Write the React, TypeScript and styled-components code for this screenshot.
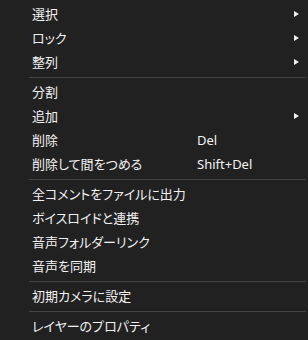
import React from "react";
import styled, { createGlobalStyle } from "styled-components";

const Global = createGlobalStyle`
  html, body { margin: 0; padding: 0; background: #212121; }
  body { width: 308px; height: 340px; overflow: hidden; }
`;

const Menu = styled.div`
  width: 308px;
  height: 340px;
  box-sizing: border-box;
  padding: 2px 0;
  background: #212121;
  display: flex;
  flex-direction: column;
  font-family: "Noto Sans CJK JP", "Noto Sans", sans-serif;
  font-size: 13px;
  font-feature-settings: "palt";
  color: #f2f2f2;
`;

const Row = styled.div`
  height: 24px;
  display: grid;
  grid-template-columns: 165px 1fr 14px;
  align-items: center;
  padding-left: 32px;
`;

const Label = styled.span`
  white-space: nowrap;
  line-height: 24px;
`;

const Shortcut = styled.span`
  font-family: "Noto Sans", sans-serif;
  white-space: nowrap;
  line-height: 24px;
`;

const Arrow = styled.span`
  width: 0;
  height: 0;
  border-top: 3.5px solid transparent;
  border-bottom: 3.5px solid transparent;
  border-left: 5px solid #f2f2f2;
  justify-self: start;
`;

const Separator = styled.div`
  height: 6px;
  display: flex;
  align-items: center;
  padding: 0 2px 0 29px;
  &::after {
    content: "";
    flex: 1;
    height: 1px;
    background: #434343;
  }
`;

type Item = { label?: string; shortcut?: string; sub?: boolean; sep?: boolean };

const items: Item[] = [
  { label: "選択", sub: true },
  { label: "ロック", sub: true },
  { label: "整列", sub: true },
  { sep: true },
  { label: "分割" },
  { label: "追加", sub: true },
  { label: "削除", shortcut: "Del" },
  { label: "削除して間をつめる", shortcut: "Shift+Del" },
  { sep: true },
  { label: "全コメントをファイルに出力" },
  { label: "ボイスロイドと連携" },
  { label: "音声フォルダーリンク" },
  { label: "音声を同期" },
  { sep: true },
  { label: "初期カメラに設定" },
  { sep: true },
  { label: "レイヤーのプロパティ" },
];

export default function App() {
  return (
    <>
      <Global />
      <Menu>
        {items.map((it, i) =>
          it.sep ? (
            <Separator key={i} />
          ) : (
            <Row key={i}>
              <Label>{it.label}</Label>
              <Shortcut>{it.shortcut ?? ""}</Shortcut>
              {it.sub ? <Arrow /> : <span />}
            </Row>
          )
        )}
      </Menu>
    </>
  );
}
